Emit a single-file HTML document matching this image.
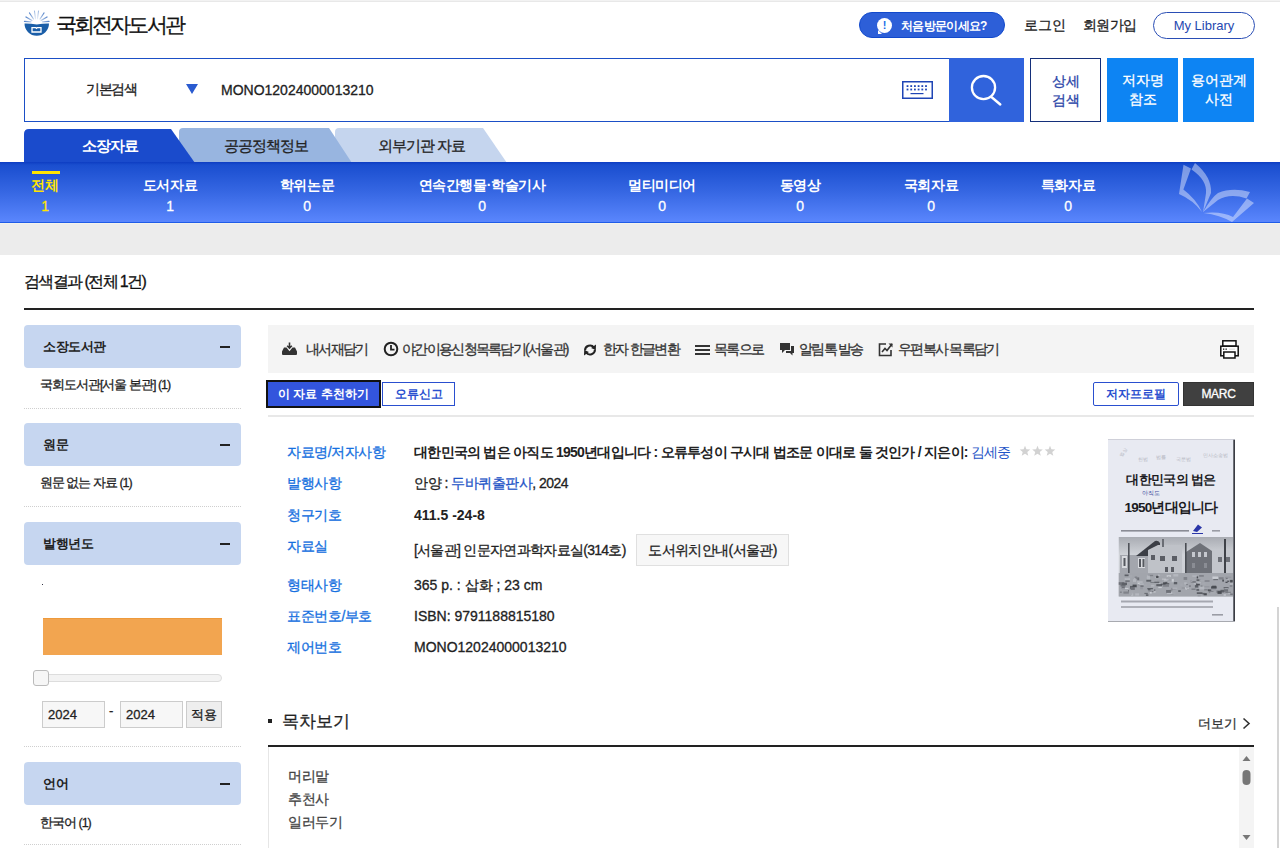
<!DOCTYPE html>
<html lang="ko"><head><meta charset="utf-8">
<style>
*{box-sizing:border-box;margin:0;padding:0}
html,body{width:1280px;height:848px;overflow:hidden;background:#fff}
body{font-family:"Liberation Sans",sans-serif;color:#222;position:relative;-webkit-text-stroke:0.3px}
.a{position:absolute;white-space:nowrap}
#topstrip{left:0;top:0;width:1280px;height:2px;background:#f2f2f2;border-bottom:1px solid #e8e8e8}
#logotxt{left:56px;top:12px;font-size:21px;color:#111;line-height:26px;letter-spacing:-2.9px}
#firstvisit{left:859px;top:12px;width:146px;height:26px;border-radius:13px;background:#2d5fd8;border:1px solid #1149cc;color:#fff;font-size:13px;line-height:24px;font-weight:bold}
#firstvisit .ic{position:absolute;left:17px;top:5px;width:15px;height:15px;border-radius:50%;background:#fff;color:#1a6fe8;font-size:11px;line-height:15px;text-align:center;font-weight:bold}
#firstvisit .ic:after{content:"";position:absolute;left:1px;bottom:-1px;border-left:4px solid #fff;border-top:4px solid transparent}
#firstvisit .t{position:absolute;left:41px;top:0.5px;font-size:12px;letter-spacing:-0.7px}
#login{left:1024px;top:16px;font-size:14px;color:#222;line-height:18px}
#join{left:1083px;top:16px;font-size:14px;color:#222;line-height:18px;letter-spacing:-0.6px}
#mylib{left:1153px;top:12px;width:102px;height:27px;border:1px solid #2a4eb5;border-radius:14px;color:#2648b0;font-size:13px;line-height:25px;text-align:center}
#search{left:24px;top:58px;width:1000px;height:64px;border:1px solid #1b4fc6}
#srchsel{left:86px;top:80px;font-size:14px;color:#222;line-height:18px;letter-spacing:-1.3px}
#srchtri{left:186px;top:84px;width:0;height:0;border-left:6px solid transparent;border-right:6px solid transparent;border-top:10px solid #2a5bd0}
#srchval{left:221px;top:81px;font-size:14px;color:#222;line-height:18px}
#kbd{left:902px;top:81px;width:31px;height:18px}
#srchbtn{left:949px;top:58px;width:75px;height:64px;background:#3063dc}
.sbtn{top:58px;width:71px;height:64px;font-size:14px;line-height:19px;text-align:center;padding-top:13px}
#detail{left:1030px;border:1px solid #142f7a;color:#2b45a8}
#author{left:1107px;background:#0d84f3;color:#fff}
#term{left:1183px;background:#0d84f3;color:#fff}
#tabs{left:0;top:126px;width:520px;height:37px}
.tabt{top:137px;font-size:15px;line-height:18px;color:#222;letter-spacing:-1px}
#band{left:0;top:162px;width:1280px;height:61px;background:linear-gradient(#0d3dc2 0px,#1a4ecf 3px,#3667e3 50%,#5a86fd 100%);border-bottom:1px solid #1f5ce8}
#greyband{left:0;top:223px;width:1280px;height:32px;background:#ececec;border-top:1px solid #f5f3ea}
.cat{top:176px;font-size:14px;color:#fff;text-align:center;font-weight:bold;width:200px;line-height:19px;letter-spacing:-0.4px}
.cat i{display:block;font-style:normal;line-height:22px;margin-top:0px;font-weight:normal;-webkit-text-stroke:0.3px}
#restitle{left:24px;top:272px;font-size:16px;color:#111;line-height:20px;letter-spacing:-1.6px}
#resline{left:24px;top:308px;width:1230px;height:2px;background:#222}
.side-h{left:24px;width:217px;height:43px;background:#c6d6f0;border-radius:4px;font-size:13px;font-weight:bold;padding-left:19px;line-height:43px;color:#222;letter-spacing:-0.4px}
.side-h span{position:absolute;right:11px;top:21px;width:10px;height:2px;background:#222}
.side-i{left:40px;font-size:12.5px;color:#222;line-height:18px;letter-spacing:-1px}
.dots{left:24px;width:217px;height:1px;border-top:1px dotted #cfcfcf}
#toolbar{left:268px;top:325px;width:986px;height:48px;background:#f4f4f4}
.tb{top:340px;font-size:14px;color:#333;line-height:18px;letter-spacing:-1.7px}
#btnrec{left:266px;top:380px;width:115px;height:28px;background:#3355dd;border:2px solid #111;color:#fff;font-size:12px;font-weight:bold;text-align:center;line-height:24px}
#btnerr{left:382px;top:382px;width:73px;height:24px;border:1px solid #2a4fcf;color:#2a4fcf;font-size:12px;text-align:center;line-height:22px;font-weight:bold}
#btnauth{left:1093px;top:382px;width:86px;height:24px;border:1px solid #2a4fcf;border-radius:2px;color:#2a4fcf;font-size:12px;text-align:center;line-height:22px;font-weight:bold}
#btnmarc{left:1183px;top:382px;width:71px;height:24px;background:#404040;border:1px solid #333;color:#fff;font-size:12px;text-align:center;line-height:22px;letter-spacing:-0.3px}
#divline{left:268px;top:415px;width:986px;height:2px;background:#e8e8e8}
.lbl{left:287px;font-size:14px;color:#1670e0;line-height:18px;letter-spacing:-0.4px}
.val{left:414px;font-size:14px;color:#222;line-height:18px}
.lnk{color:#1f55c7}
#locbtn{left:636px;top:534px;width:153px;height:32px;background:#f7f7f7;border:1px solid #e0e0e0;font-size:14px;line-height:31px;text-align:center;color:#222;letter-spacing:-0.6px}
#cover{left:1108px;top:439px;width:127px;height:183px}
#tochead{left:282px;top:711px;font-size:17px;color:#222;line-height:22px}
#tocbul{left:268px;top:719px;width:4px;height:4px;background:#222}
#more{left:1198px;top:715px;font-size:13px;color:#333;line-height:18px}
#tocline{left:268px;top:745px;width:986px;height:2px;background:#222}
#tocbox{left:268px;top:747px;width:986px;height:110px;border-left:1px solid #e6e6e6;border-right:1px solid #e6e6e6}
#scroll{left:1239px;top:747px;width:15px;height:102px;background:#f4f4f4}
.toc{left:288px;font-size:14px;color:#444;line-height:18px;letter-spacing:-0.5px}
#rightedge{left:1277px;top:607px;width:2px;height:241px;background:#d4d4d4}
.nb{-webkit-text-stroke:0}
.cat,.side-h,#btnrec,#firstvisit,#btnerr,#btnauth,#mylib{-webkit-text-stroke:0}
</style></head><body>
<div class="a" id="topstrip"></div>
<svg class="a" style="left:20px;top:8px" width="34" height="32" viewBox="0 0 34 32">
 <defs><radialGradient id="rg" cx="16.75" cy="15" r="13" gradientUnits="userSpaceOnUse"><stop offset="0.15" stop-color="#ffffff"/><stop offset="0.55" stop-color="#9db8e0"/><stop offset="1" stop-color="#4a7bc6"/></radialGradient></defs>
 <g stroke="url(#rg)" stroke-linecap="round" fill="none">
  <path d="M4.5 13.4 L11 13.8 M22.5 13.8 L29 13.4" stroke-width="1.3"/>
  <path d="M6 9 L12 12.5 M27 9 L21 12.5" stroke-width="1.3"/>
  <path d="M9.5 5 L13.5 11 M24 5 L20 11" stroke-width="1.2"/>
  <path d="M14.5 3 L15.5 11 M18.5 3 L17.5 11" stroke-width="1" opacity="0.6"/>
 </g>
 <path d="M4.5 15.5 Q10 15.3 16.75 16.6 Q23.5 15.3 29 15.5 A12.25 12.2 0 0 1 4.5 15.5 Z" fill="#1a5ea8"/>
 <path d="M12 24 V19.6 H15.6 L16.5 20.4 L17.4 19.6 H21 V24 Z" fill="none" stroke="#fff" stroke-width="1.3"/>
</svg>
<div class="a" id="logotxt">국회전자도서관</div>
<div class="a" id="firstvisit"><span class="ic">!</span><span class="t">처음방문이세요?</span></div>
<div class="a" id="login">로그인</div>
<div class="a" id="join">회원가입</div>
<div class="a" id="mylib">My Library</div>

<div class="a" id="search"></div>
<div class="a" id="srchsel">기본검색</div>
<div class="a" id="srchtri"></div>
<div class="a" id="srchval">MONO12024000013210</div>
<svg class="a" id="kbd" viewBox="0 0 31 18">
 <rect x="0.75" y="0.75" width="29.5" height="16.5" fill="none" stroke="#1f45b5" stroke-width="1.5"/>
 <g fill="#1f45b5"><rect x="4.6" y="4.2" width="1.8" height="1.8"/><rect x="8.3" y="4.2" width="1.8" height="1.8"/><rect x="12.0" y="4.2" width="1.8" height="1.8"/><rect x="15.7" y="4.2" width="1.8" height="1.8"/><rect x="19.4" y="4.2" width="1.8" height="1.8"/><rect x="23.1" y="4.2" width="1.8" height="1.8"/><rect x="4.6" y="7.6" width="1.8" height="1.8"/><rect x="8.3" y="7.6" width="1.8" height="1.8"/><rect x="12.0" y="7.6" width="1.8" height="1.8"/><rect x="15.7" y="7.6" width="1.8" height="1.8"/><rect x="19.4" y="7.6" width="1.8" height="1.8"/><rect x="23.1" y="7.6" width="1.8" height="1.8"/><rect x="8.5" y="12" width="13" height="1.2"/></g>
</svg>
<div class="a" id="srchbtn"><svg width="75" height="63" viewBox="0 0 75 63"><circle cx="34.5" cy="29.6" r="11.6" fill="none" stroke="#fff" stroke-width="2.3"/><line x1="43" y1="39.5" x2="51.3" y2="46.5" stroke="#fff" stroke-width="2.4" stroke-linecap="round"/></svg></div>
<div class="a sbtn" id="detail">상세<br>검색</div>
<div class="a sbtn" id="author">저자명<br>참조</div>
<div class="a sbtn" id="term">용어관계<br>사전</div>

<svg class="a" id="tabs" viewBox="0 0 520 37">
 <path d="M335 6 Q335 2 339 2 H483 L507 37 H335 Z" fill="#c5d5ee"/>
 <path d="M179 6 Q179 2 183 2 H329 L352 37 H179 Z" fill="#98b5e0"/>
 <path d="M24 37 V8 Q24 3 29 3 H171 L195 37 Z" fill="#1a4bcc"/>
</svg>
<div class="a tabt nb" style="left:82px;color:#fff;font-weight:bold">소장자료</div>
<div class="a tabt" style="left:224px">공공정책정보</div>
<div class="a tabt" style="left:378px">외부기관 자료</div>

<div class="a" id="band"></div>
<div class="a" style="left:32px;top:171px;width:28px;height:3px;background:#ffe400"></div>
<div class="a cat" style="left:-55px;color:#ffe400">전체<i>1</i></div>
<div class="a cat" style="left:70px">도서자료<i>1</i></div>
<div class="a cat" style="left:207px">학위논문<i>0</i></div>
<div class="a cat" style="left:382px">연속간행물·학술기사<i>0</i></div>
<div class="a cat" style="left:562px">멀티미디어<i>0</i></div>
<div class="a cat" style="left:700px">동영상<i>0</i></div>
<div class="a cat" style="left:831px">국회자료<i>0</i></div>
<div class="a cat" style="left:968px">특화자료<i>0</i></div>
<svg class="a" style="left:1160px;top:155px" width="120" height="75" viewBox="0 0 120 75">
 <g fill="rgba(255,255,255,0.42)">
  <path d="M23.5 9.8 L31 13.5 L23.4 34.5 Q36 44 42 57 Q33 45 19 39 Z"/>
  <path d="M35 8 Q52 22 51 38 L43 57 Q45 45 46 38 Q47 25 31.5 14.5 Z"/>
  <path d="M43 57 Q52 42 58 38 Q72 32 90 37 L86.5 43.5 Q70 38 58 45 Z"/>
  <path d="M43.5 58 Q62 56 73 62 L87 43.5 L94 48 L72 67 Q60 60 43.5 58 Z"/>
 </g>
</svg>
<div class="a" id="greyband"></div>

<div class="a" id="restitle">검색결과 (전체 1건)</div>
<div class="a" id="resline"></div>

<div class="a side-h" style="top:325px">소장도서관<span></span></div>
<div class="a side-i" style="top:376px">국회도서관[서울 본관] (1)</div>
<div class="a dots" style="top:408px"></div>
<div class="a side-h" style="top:423px">원문<span></span></div>
<div class="a side-i" style="top:474px">원문 없는 자료 (1)</div>
<div class="a dots" style="top:506px"></div>
<div class="a side-h" style="top:522px">발행년도<span></span></div>
<div class="a" style="left:42px;top:584px;width:1px;height:1px;background:#334"></div>
<div class="a" style="left:43px;top:618px;width:179px;height:37px;background:#f2a550;border-top:1px solid #ee9a3c"></div>
<div class="a" style="left:42px;top:674px;width:180px;height:8px;background:#f3f3f3;border:1px solid #ddd;border-radius:4px"></div>
<div class="a" style="left:33px;top:670px;width:16px;height:16px;background:#f6f6f6;border:1px solid #bbb;border-radius:3px"></div>
<div class="a" style="left:42px;top:701px;width:63px;height:27px;border:1px solid #ccc;background:#f7f7f7;font-size:13px;line-height:25px;padding-left:5px">2024</div>
<div class="a" style="left:109px;top:704px;font-size:13px;line-height:14px">-</div>
<div class="a" style="left:120px;top:701px;width:63px;height:27px;border:1px solid #ccc;background:#f7f7f7;font-size:13px;line-height:25px;padding-left:5px">2024</div>
<div class="a" style="left:186px;top:701px;width:36px;height:27px;border:1px solid #ccc;background:#eee;font-size:13px;line-height:25px;text-align:center">적용</div>
<div class="a dots" style="top:746px"></div>
<div class="a side-h" style="top:762px">언어<span></span></div>
<div class="a side-i" style="top:814px">한국어 (1)</div>
<div class="a dots" style="top:844px"></div>

<div class="a" id="toolbar"></div>
<svg class="a" style="left:281px;top:342px" width="17" height="14" viewBox="0 0 17 14"><path d="M1 9.5 L3 5.5 H5.5 L8.5 9.2 L11.5 5.5 H14 L16 9.5 V12 Q16 13 15 13 H2 Q1 13 1 12 Z" fill="#333"/><path d="M8.5 0.5 V6 M6.2 3.8 L8.5 6.2 L10.8 3.8" stroke="#333" stroke-width="1.6" fill="none"/></svg>
<div class="a tb" style="left:306px">내서재담기</div>
<svg class="a" style="left:383px;top:341px" width="16" height="16" viewBox="0 0 16 16"><circle cx="8" cy="8" r="6.3" fill="none" stroke="#222" stroke-width="2"/><path d="M8 4 V8.7 H11.5" stroke="#222" stroke-width="1.8" fill="none"/></svg>
<div class="a tb" style="left:402px">야간이용신청목록담기(서울관)</div>
<svg class="a" style="left:583px;top:343px" width="14" height="14" viewBox="0 0 14 14"><path d="M2 7.5 A5 5 0 0 1 11 4.5 M12 6.5 A5 5 0 0 1 3 9.5" stroke="#222" stroke-width="2" fill="none"/><path d="M13 1.5 L12.8 7 L8 5 Z M1 12.5 L1.2 7 L6 9 Z" fill="#222"/></svg>
<div class="a tb" style="left:603px">한자 한글변환</div>
<svg class="a" style="left:695px;top:344px" width="15" height="12" viewBox="0 0 15 12"><rect x="0" y="1" width="15" height="2" fill="#333"/><rect x="0" y="5" width="15" height="2" fill="#333"/><rect x="0" y="9" width="15" height="2" fill="#333"/></svg>
<div class="a tb" style="left:714px">목록으로</div>
<svg class="a" style="left:779px;top:342px" width="16" height="14" viewBox="0 0 16 14"><path d="M1 1 H11 V8 H6 L3 11 V8 H1 Z" fill="#333"/><path d="M12 4 H15 V11 H13.5 V13.5 L11 11 H7 V9 H12 Z" fill="#333"/></svg>
<div class="a tb" style="left:799px">알림톡 발송</div>
<svg class="a" style="left:878px;top:342px" width="16" height="15" viewBox="0 0 16 15"><path d="M8 2 H1.5 V13.5 H13 V8" stroke="#333" stroke-width="1.6" fill="none"/><path d="M4 10 L7 6.5 L9 8.5 L14 2" stroke="#333" stroke-width="1.6" fill="none"/><path d="M10.5 1.5 H14.5 V5.5 Z" fill="#333"/></svg>
<div class="a tb" style="left:898px">우편복사 목록담기</div>
<svg class="a" style="left:1220px;top:340px" width="19" height="19" viewBox="0 0 19 19">
<rect x="2.8" y="0.8" width="13.2" height="5.4" fill="#fff" stroke="#111" stroke-width="1.5"/>
<rect x="0.8" y="6.2" width="17.4" height="9.6" fill="#fff" stroke="#111" stroke-width="1.5"/>
<rect x="3.8" y="12" width="11.2" height="6" fill="#fff" stroke="#111" stroke-width="1.5"/>
<rect x="3" y="8.5" width="1.3" height="1.3" fill="#111"/><rect x="5.5" y="8.5" width="1.3" height="1.3" fill="#111"/>
<line x1="9" y1="9.2" x2="15" y2="9.2" stroke="#ccc" stroke-width="0.8"/>
</svg>

<div class="a" id="btnrec">이 자료 추천하기</div>
<div class="a" id="btnerr">오류신고</div>
<div class="a" id="btnauth">저자프로필</div>
<div class="a" id="btnmarc">MARC</div>
<div class="a" id="divline"></div>

<div class="a lbl" style="top:443px">자료명/저자사항</div>
<div class="a val" style="top:443px;font-weight:bold;letter-spacing:-0.75px;-webkit-text-stroke:0">대한민국의 법은 아직도 1950년대입니다 : 오류투성이 구시대 법조문 이대로 둘 것인가 / 지은이: <span class="lnk" style="font-weight:normal">김세중</span></div>
<svg class="a" style="left:1019px;top:445px" width="40" height="12" viewBox="0 0 40 12"><g fill="#d2d2d2"><polygon points="6.00,0.70 7.41,4.36 11.33,4.57 8.28,7.04 9.29,10.83 6.00,8.70 2.71,10.83 3.72,7.04 0.67,4.57 4.59,4.36"/><polygon points="18.50,0.70 19.91,4.36 23.83,4.57 20.78,7.04 21.79,10.83 18.50,8.70 15.21,10.83 16.22,7.04 13.17,4.57 17.09,4.36"/><polygon points="31.00,0.70 32.41,4.36 36.33,4.57 33.28,7.04 34.29,10.83 31.00,8.70 27.71,10.83 28.72,7.04 25.67,4.57 29.59,4.36"/></g></svg>
<div class="a lbl" style="top:474px">발행사항</div>
<div class="a val" style="top:474px;letter-spacing:-0.5px">안양 : <span class="lnk">두바퀴출판사</span>, 2024</div>
<div class="a lbl" style="top:506px">청구기호</div>
<div class="a val" style="top:506px;font-weight:bold;-webkit-text-stroke:0">411.5 -24-8</div>
<div class="a lbl" style="top:537px">자료실</div>
<div class="a val" style="top:541px;letter-spacing:-0.7px">[서울관] 인문자연과학자료실(314호)</div>
<div class="a" id="locbtn">도서위치안내(서울관)</div>
<div class="a lbl" style="top:576px">형태사항</div>
<div class="a val" style="top:576px">365 p. : 삽화 ; 23 cm</div>
<div class="a lbl" style="top:607px">표준번호/부호</div>
<div class="a val" style="top:607px">ISBN: 9791188815180</div>
<div class="a lbl" style="top:638px">제어번호</div>
<div class="a val" style="top:638px">MONO12024000013210</div>

<svg class="a" id="cover" viewBox="0 0 127 183">
 <defs>
  <linearGradient id="sky" x1="0" y1="0" x2="0" y2="1"><stop offset="0" stop-color="#a9acb3"/><stop offset="0.3" stop-color="#d0d3d8"/><stop offset="1" stop-color="#c4c7cd"/></linearGradient>
  <clipPath id="pc"><rect x="10.5" y="98" width="114.5" height="59.5"/></clipPath>
 </defs>
 <rect x="0" y="0" width="127" height="183" fill="#e8eaf2"/>
 <rect x="125.3" y="0" width="1.7" height="183" fill="#3a3c44"/>
 <rect x="0" y="0" width="127" height="0.8" fill="#c8cad2"/>
 <rect x="0" y="182" width="127" height="1" fill="#a8aab0"/>
 <g fill="#b3b5c0" font-size="4.5"><text x="14" y="18" transform="rotate(-60 14 18)">법상</text><text x="30" y="22">헌법</text><text x="48" y="20">법률</text><text x="68" y="22">국문법</text><text x="95" y="18">민사소송법</text></g>
 <text x="63" y="45" font-size="12.6" font-weight="bold" text-anchor="middle" fill="#1b1b1f" letter-spacing="-0.6">대한민국의 법은</text>
 <text x="63" y="73" font-size="13.5" font-weight="bold" text-anchor="middle" fill="#1b1b1f" letter-spacing="-0.8">1950년대입니다</text>
 <text x="34" y="56" font-size="6" fill="#3d4aa0">아직도</text>
 <rect x="13" y="91" width="68" height="1.6" fill="#8a8c95"/>
 <path d="M85 92 L90 85.5 L94 88.5 L89 93 Z M84 94 H95 V95 H84 Z" fill="#2a36a8"/>
 <rect x="104" y="91" width="8" height="1.6" fill="#9a9ca5"/>
 <g clip-path="url(#pc)">
 <rect x="10.5" y="98" width="115" height="60" fill="url(#sky)"/>
 <path d="M12 137 V116 H41 V137 Z" fill="#a3a6ad"/>
 <g fill="#d8dade"><rect x="14" y="117" width="5" height="12"/><rect x="30" y="119" width="7" height="10"/></g>
 <g fill="#55585f"><rect x="31" y="120" width="2" height="8"/><rect x="34.5" y="120" width="2" height="8"/><rect x="15.5" y="119" width="2" height="8"/></g>
 <path d="M28 117 L47 102 Q50 101 52 104 V117 Z" fill="#3b3e45"/>
 <path d="M40 136 V111 L50 106 H74 V136 Z" fill="#bfc2c8"/>
 <g fill="#5a5d64"><rect x="43" y="116" width="4" height="5"/><rect x="52" y="117" width="5" height="5"/><rect x="64" y="117" width="5" height="5"/><rect x="57" y="128" width="3" height="5"/><rect x="63" y="128" width="3" height="5"/></g>
 <rect x="54" y="100" width="2" height="8" fill="#6a6d74"/>
 <path d="M78 135 V113 L92 104 L104 112 V135 Z" fill="#6e7178"/>
 <g fill="#c5c8ce"><rect x="84" y="113" width="3" height="5"/><rect x="90" y="113" width="3" height="5"/><rect x="96" y="113" width="3" height="5"/></g>
 <g fill="#8a8d94"><rect x="84" y="124" width="3" height="5"/><rect x="96" y="124" width="3" height="5"/></g>
 <rect x="77" y="104" width="1.6" height="32" fill="#4a4d53"/>
 <rect x="20" y="104" width="1.6" height="32" fill="#50535a"/>
 <path d="M104 136 V111 H125 V136 Z" fill="#c3c6cc"/>
 <g fill="#6c6f76"><rect x="110" y="118" width="4" height="5"/><rect x="118" y="118" width="4" height="5"/></g>
 <rect x="116" y="100" width="2" height="36" fill="#3f4248"/>
 <rect x="10.5" y="134" width="115" height="24" fill="#a2a5ac"/>
 <rect x="46.8" y="138.2" width="4.3" height="1.0" fill="#b4b7be"/><rect x="51.5" y="136.2" width="3.5" height="0.9" fill="#a5a8af"/><rect x="57.3" y="140.1" width="3.8" height="0.9" fill="#b4b7be"/><rect x="116.6" y="148.2" width="3.9" height="0.9" fill="#a5a8af"/><rect x="16.1" y="139.6" width="3.8" height="1.1" fill="#a5a8af"/><rect x="26.7" y="137.5" width="2.5" height="2.6" fill="#80838a"/><rect x="22.0" y="147.0" width="1.9" height="1.0" fill="#b4b7be"/><rect x="73.7" y="148.0" width="3.5" height="2.0" fill="#979aa1"/><rect x="62.6" y="154.4" width="2.8" height="1.3" fill="#80838a"/><rect x="88.8" y="140.1" width="3.9" height="2.0" fill="#979aa1"/><rect x="92.2" y="141.0" width="5.9" height="1.1" fill="#a5a8af"/><rect x="29.0" y="142.2" width="5.7" height="1.7" fill="#b4b7be"/><rect x="96.1" y="147.0" width="5.4" height="1.5" fill="#979aa1"/><rect x="77.1" y="147.2" width="3.3" height="2.6" fill="#c9ccd2"/><rect x="63.6" y="148.9" width="1.3" height="2.3" fill="#6e7178"/><rect x="42.4" y="143.1" width="4.3" height="0.8" fill="#6e7178"/><rect x="50.3" y="147.8" width="3.5" height="1.3" fill="#c9ccd2"/><rect x="25.0" y="140.2" width="3.0" height="2.7" fill="#b4b7be"/><rect x="29.1" y="143.4" width="2.4" height="1.1" fill="#a5a8af"/><rect x="107.3" y="140.8" width="3.1" height="1.6" fill="#a5a8af"/><rect x="117.8" y="138.2" width="1.9" height="1.3" fill="#4a4d53"/><rect x="11.9" y="152.5" width="1.9" height="1.4" fill="#80838a"/><rect x="57.4" y="142.8" width="3.8" height="2.9" fill="#5d6067"/><rect x="61.6" y="153.3" width="5.8" height="2.3" fill="#a5a8af"/><rect x="55.1" y="143.3" width="3.4" height="1.7" fill="#4a4d53"/><rect x="18.0" y="139.4" width="1.8" height="1.5" fill="#5d6067"/><rect x="22.0" y="146.9" width="3.7" height="2.9" fill="#5d6067"/><rect x="18.4" y="139.4" width="2.9" height="2.2" fill="#979aa1"/><rect x="78.0" y="145.0" width="1.6" height="1.9" fill="#6e7178"/><rect x="64.3" y="141.5" width="1.7" height="2.4" fill="#c9ccd2"/><rect x="64.1" y="149.5" width="3.6" height="1.3" fill="#979aa1"/><rect x="26.9" y="146.4" width="1.1" height="2.0" fill="#b4b7be"/><rect x="88.5" y="140.5" width="2.8" height="1.2" fill="#4a4d53"/><rect x="70.2" y="151.4" width="2.6" height="1.3" fill="#4a4d53"/><rect x="100.8" y="152.2" width="4.7" height="1.3" fill="#6e7178"/><rect x="50.3" y="135.6" width="1.1" height="1.4" fill="#c9ccd2"/><rect x="32.2" y="147.7" width="2.7" height="2.6" fill="#979aa1"/><rect x="117.5" y="142.7" width="2.1" height="1.3" fill="#4a4d53"/><rect x="48.3" y="145.1" width="5.9" height="2.1" fill="#5d6067"/><rect x="64.2" y="148.7" width="5.0" height="1.0" fill="#b4b7be"/><rect x="112.4" y="151.4" width="4.8" height="1.9" fill="#80838a"/><rect x="59.1" y="148.4" width="1.4" height="2.9" fill="#a5a8af"/><rect x="62.4" y="150.6" width="1.4" height="1.1" fill="#80838a"/><rect x="13.6" y="147.4" width="3.3" height="2.2" fill="#6e7178"/><rect x="84.1" y="142.4" width="3.7" height="1.1" fill="#5d6067"/><rect x="100.0" y="150.3" width="1.5" height="2.4" fill="#80838a"/><rect x="59.1" y="153.3" width="5.1" height="1.3" fill="#c9ccd2"/><rect x="34.3" y="145.5" width="4.8" height="1.5" fill="#a5a8af"/><rect x="103.9" y="136.3" width="4.7" height="2.8" fill="#a5a8af"/><rect x="103.1" y="153.4" width="1.7" height="1.1" fill="#5d6067"/><rect x="108.3" y="151.3" width="4.0" height="2.5" fill="#80838a"/><rect x="29.8" y="144.9" width="4.6" height="2.0" fill="#979aa1"/><rect x="86.9" y="146.1" width="3.4" height="2.5" fill="#5d6067"/><rect x="38.3" y="140.8" width="4.9" height="1.9" fill="#5d6067"/><rect x="95.6" y="154.2" width="3.2" height="2.1" fill="#4a4d53"/><rect x="88.1" y="144.5" width="3.7" height="1.9" fill="#4a4d53"/><rect x="88.8" y="153.4" width="5.7" height="1.4" fill="#4a4d53"/><rect x="104.6" y="137.9" width="1.6" height="1.8" fill="#b4b7be"/><rect x="85.7" y="144.0" width="2.1" height="1.5" fill="#b4b7be"/><rect x="111.0" y="138.2" width="4.6" height="2.3" fill="#80838a"/><rect x="38.8" y="137.9" width="3.3" height="2.4" fill="#b4b7be"/><rect x="55.1" y="145.2" width="5.9" height="2.6" fill="#80838a"/><rect x="89.6" y="155.9" width="3.0" height="1.7" fill="#979aa1"/><rect x="46.2" y="150.2" width="1.1" height="2.0" fill="#6e7178"/><rect x="89.3" y="143.1" width="3.6" height="1.4" fill="#b4b7be"/><rect x="23.1" y="154.3" width="2.1" height="2.7" fill="#b4b7be"/><rect x="40.2" y="135.8" width="4.9" height="1.4" fill="#80838a"/><rect x="102.3" y="152.8" width="4.4" height="2.9" fill="#a5a8af"/><rect x="27.2" y="154.3" width="3.9" height="2.3" fill="#b4b7be"/><rect x="41.8" y="151.8" width="1.9" height="2.8" fill="#c9ccd2"/><rect x="115.6" y="148.3" width="5.0" height="1.0" fill="#4a4d53"/><rect x="18.0" y="153.1" width="3.3" height="1.5" fill="#a5a8af"/><rect x="114.3" y="140.6" width="1.6" height="2.0" fill="#4a4d53"/><rect x="115.6" y="155.4" width="2.3" height="1.2" fill="#c9ccd2"/><rect x="80.9" y="146.2" width="2.0" height="1.8" fill="#80838a"/><rect x="40.8" y="151.9" width="6.0" height="0.9" fill="#5d6067"/><rect x="92.6" y="146.6" width="1.9" height="1.8" fill="#6e7178"/><rect x="22.4" y="152.2" width="3.2" height="1.9" fill="#a5a8af"/><rect x="119.2" y="141.5" width="2.1" height="1.3" fill="#4a4d53"/><rect x="103.7" y="149.8" width="4.2" height="1.7" fill="#979aa1"/><rect x="120.5" y="152.6" width="1.1" height="2.2" fill="#c9ccd2"/><rect x="58.7" y="136.2" width="4.3" height="1.6" fill="#c9ccd2"/><rect x="77.6" y="149.5" width="1.2" height="1.2" fill="#c9ccd2"/><rect x="60.4" y="140.5" width="5.8" height="2.9" fill="#979aa1"/><rect x="37.9" y="155.3" width="2.5" height="1.6" fill="#5d6067"/><rect x="48.1" y="136.8" width="2.4" height="2.2" fill="#4a4d53"/><rect x="67.0" y="135.1" width="2.3" height="1.0" fill="#a5a8af"/><rect x="76.2" y="143.3" width="2.5" height="2.2" fill="#b4b7be"/><rect x="76.1" y="146.1" width="4.8" height="2.2" fill="#a5a8af"/><rect x="96.1" y="150.1" width="3.5" height="1.4" fill="#80838a"/><rect x="15.4" y="152.5" width="5.5" height="2.2" fill="#80838a"/><rect x="112.4" y="150.8" width="3.8" height="2.6" fill="#5d6067"/><rect x="103.1" y="147.3" width="5.5" height="2.3" fill="#4a4d53"/><rect x="20.0" y="135.9" width="4.2" height="2.9" fill="#a5a8af"/><rect x="104.1" y="146.7" width="4.1" height="2.2" fill="#4a4d53"/><rect x="65.3" y="135.1" width="5.0" height="2.4" fill="#b4b7be"/><rect x="84.3" y="136.4" width="4.7" height="1.4" fill="#b4b7be"/><rect x="105.3" y="139.9" width="4.8" height="1.3" fill="#6e7178"/><rect x="65.8" y="143.0" width="3.4" height="2.3" fill="#5d6067"/><rect x="79.6" y="148.5" width="1.4" height="1.1" fill="#c9ccd2"/><rect x="83.5" y="149.6" width="4.1" height="1.1" fill="#6e7178"/><rect x="17.3" y="140.6" width="4.4" height="2.3" fill="#6e7178"/><rect x="43.1" y="145.8" width="3.3" height="1.8" fill="#b4b7be"/><rect x="121.7" y="146.5" width="2.6" height="1.0" fill="#6e7178"/><rect x="12.5" y="144.6" width="5.1" height="2.9" fill="#6e7178"/><rect x="121.8" y="143.1" width="5.6" height="2.8" fill="#b4b7be"/><rect x="75.6" y="138.0" width="3.6" height="2.9" fill="#80838a"/><rect x="78.1" y="148.3" width="2.4" height="1.0" fill="#979aa1"/><rect x="36.4" y="153.9" width="3.4" height="0.9" fill="#5d6067"/><rect x="116.9" y="149.3" width="3.0" height="2.4" fill="#a5a8af"/><rect x="49.0" y="141.6" width="5.2" height="0.8" fill="#979aa1"/><rect x="104.5" y="137.5" width="5.6" height="2.4" fill="#c9ccd2"/><rect x="38.9" y="136.4" width="3.0" height="2.7" fill="#b4b7be"/><rect x="50.9" y="144.0" width="2.4" height="0.9" fill="#b4b7be"/><rect x="16.3" y="148.9" width="4.2" height="1.1" fill="#c9ccd2"/><rect x="59.4" y="141.6" width="4.9" height="2.5" fill="#a5a8af"/><rect x="109.5" y="152.1" width="4.2" height="2.8" fill="#4a4d53"/><rect x="91.1" y="136.0" width="4.7" height="1.8" fill="#80838a"/><rect x="82.7" y="141.0" width="1.2" height="2.8" fill="#80838a"/><rect x="29.6" y="143.7" width="2.4" height="1.4" fill="#c9ccd2"/><rect x="56.0" y="140.0" width="3.4" height="2.3" fill="#b4b7be"/><rect x="29.2" y="138.4" width="2.0" height="2.8" fill="#6e7178"/><rect x="72.1" y="144.5" width="2.7" height="2.5" fill="#a5a8af"/><rect x="26.1" y="139.0" width="1.5" height="1.6" fill="#b4b7be"/><rect x="46.3" y="142.7" width="5.0" height="1.2" fill="#5d6067"/><rect x="94.5" y="143.7" width="3.1" height="2.0" fill="#a5a8af"/><rect x="40.8" y="150.8" width="3.5" height="2.1" fill="#979aa1"/><rect x="24.6" y="145.6" width="4.1" height="2.7" fill="#4a4d53"/><rect x="20.9" y="153.8" width="2.9" height="2.2" fill="#a5a8af"/><rect x="117.3" y="152.8" width="5.4" height="0.8" fill="#5d6067"/><rect x="58.1" y="151.0" width="5.0" height="2.9" fill="#6e7178"/><rect x="10.5" y="143.2" width="5.6" height="2.6" fill="#6e7178"/><rect x="119.4" y="140.2" width="1.5" height="1.1" fill="#b4b7be"/><rect x="115.9" y="150.2" width="4.2" height="2.5" fill="#6e7178"/><rect x="20.0" y="151.3" width="1.0" height="1.1" fill="#5d6067"/><rect x="82.8" y="141.4" width="1.6" height="1.4" fill="#a5a8af"/><rect x="88.7" y="137.4" width="1.4" height="2.0" fill="#4a4d53"/><rect x="54.0" y="139.7" width="4.0" height="0.8" fill="#c9ccd2"/><rect x="122.1" y="140.9" width="2.6" height="2.6" fill="#4a4d53"/><rect x="63.7" y="139.9" width="2.2" height="2.9" fill="#c9ccd2"/><rect x="16.7" y="139.1" width="5.4" height="2.2" fill="#b4b7be"/><rect x="39.3" y="149.0" width="5.6" height="1.3" fill="#5d6067"/><rect x="88.4" y="150.1" width="2.8" height="1.7" fill="#5d6067"/><rect x="99.8" y="150.5" width="3.5" height="1.3" fill="#4a4d53"/><rect x="45.4" y="152.2" width="2.2" height="1.3" fill="#c9ccd2"/><rect x="22.7" y="148.1" width="4.1" height="2.8" fill="#6e7178"/><rect x="57.2" y="149.0" width="5.7" height="1.1" fill="#a5a8af"/><rect x="16.6" y="135.5" width="4.0" height="1.7" fill="#5d6067"/><rect x="31.1" y="144.4" width="4.6" height="1.5" fill="#b4b7be"/><rect x="122.2" y="154.6" width="2.6" height="1.2" fill="#6e7178"/><rect x="14.1" y="149.0" width="2.9" height="1.6" fill="#979aa1"/><rect x="60.1" y="137.3" width="1.4" height="1.0" fill="#a5a8af"/><rect x="117.5" y="137.6" width="5.8" height="1.3" fill="#979aa1"/><rect x="96.6" y="141.5" width="5.0" height="1.0" fill="#6e7178"/><rect x="32.4" y="146.4" width="3.2" height="1.5" fill="#6e7178"/><rect x="13.9" y="143.6" width="5.1" height="2.5" fill="#5d6067"/><rect x="52.6" y="144.7" width="5.0" height="0.9" fill="#4a4d53"/><rect x="94.2" y="153.9" width="2.7" height="1.4" fill="#5d6067"/><rect x="39.9" y="150.0" width="2.6" height="1.4" fill="#5d6067"/><rect x="91.3" y="147.5" width="5.0" height="2.9" fill="#b4b7be"/>
 </g>
 <rect x="13" y="161.5" width="92" height="2" fill="#a5a7b0"/>
 <rect x="13" y="167" width="92" height="2" fill="#aeb0b8"/>
 <rect x="104" y="175" width="11" height="1.6" fill="#9a9ca5"/>
</svg>

<div class="a" id="tocbul"></div>
<div class="a" id="tochead">목차보기</div>
<div class="a" id="more">더보기</div>
<svg class="a" style="left:1242px;top:717px" width="9" height="13" viewBox="0 0 9 13"><path d="M1.5 1.5 L7 6.5 L1.5 11.5" stroke="#333" stroke-width="1.6" fill="none"/></svg>
<div class="a" id="tocline"></div>
<div class="a" id="tocbox"></div>
<div class="a" id="scroll"><svg width="15" height="102" viewBox="0 0 15 102"><path d="M3.5 14 L7.5 9 L11.5 14 Z" fill="#777"/><rect x="3.5" y="23" width="8" height="15" rx="4" fill="#777"/><path d="M3.5 88 L7.5 93 L11.5 88 Z" fill="#777"/></svg></div>
<div class="a toc" style="top:767px">머리말</div>
<div class="a toc" style="top:790px">추천사</div>
<div class="a toc" style="top:813px">일러두기</div>
<div class="a" id="rightedge"></div>
</body></html>
